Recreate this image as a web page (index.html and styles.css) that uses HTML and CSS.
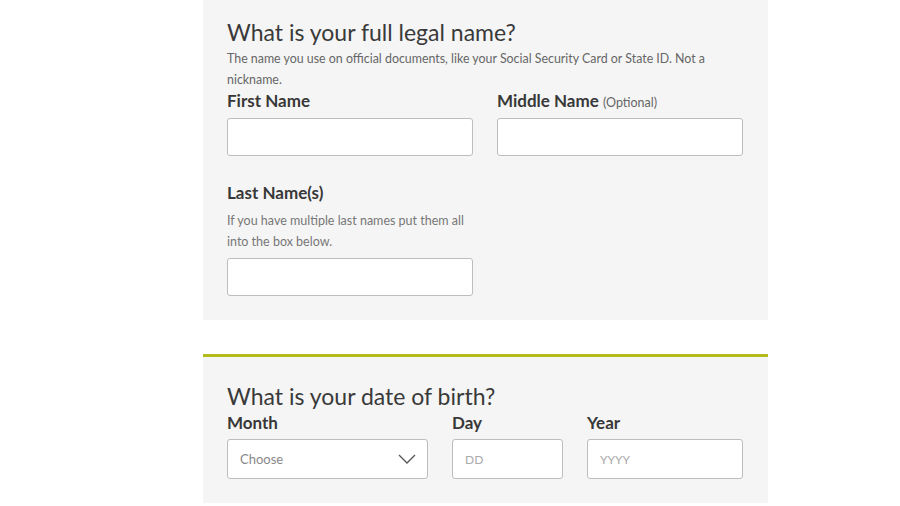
FILE: index.html
```html
<!DOCTYPE html>
<html>
<head>
<meta charset="utf-8">
<link rel="stylesheet" href="styles.css">
</head>
<body>
<div class="page">
  <section class="card">
    <h2 class="q">What is your full legal name?</h2>
    <p class="hint">The name you use on official documents, like your Social Security Card or State ID. Not a nickname.</p>
    <div class="row">
      <div class="field">
        <label class="lbl">First Name</label>
        <div class="input"></div>
      </div>
      <div class="field">
        <label class="lbl">Middle Name <span class="opt">(Optional)</span></label>
        <div class="input"></div>
      </div>
    </div>
    <div class="row last">
      <div class="field">
        <label class="lbl">Last Name(s)</label>
        <p class="help">If you have multiple last names put them all into the box below.</p>
        <div class="input"></div>
      </div>
    </div>
  </section>
  <section class="card accent">
    <h2 class="q">What is your date of birth?</h2>
    <div class="row dob">
      <div class="field month">
        <label class="lbl">Month</label>
        <div class="input select"><span class="ph">Choose</span>
          <svg width="18" height="10" viewBox="0 0 18 10"><path d="M1 1 L9 9 L17 1" fill="none" stroke="#555" stroke-width="1.3"/></svg>
        </div>
      </div>
      <div class="field day">
        <label class="lbl">Day</label>
        <div class="input"><span class="ph light">DD</span></div>
      </div>
      <div class="field year">
        <label class="lbl">Year</label>
        <div class="input"><span class="ph light">YYYY</span></div>
      </div>
    </div>
  </section>
</div>
</body>
</html>
```
FILE: styles.css
```css
* { box-sizing: border-box; }
body { margin: 0; background: #fff; font-family: "Lato", "Open Sans", sans-serif; color: #333; }
.page { width: 565px; margin-left: 203px; }
.card { background: #f5f5f5; padding: 16px 24px 24px; }
.card.accent { margin-top: 34px; border-top: 3px solid #b4bc1c; padding-top: 23px; height: 149px; }
.q { margin: 0; font-size: 23px; font-weight: 400; line-height: 32px; color: #3a3a3a; }
.hint { margin: 0; font-size: 12.4px; line-height: 21px; color: #666; width: 500px; }
.row { display: flex; gap: 24px; }
.field { width: 246px; display: flex; flex-direction: column; }
.lbl { display: block; height: 22px; font-size: 17px; font-weight: 700; line-height: 22px; color: #383838; margin-bottom: 6px; }
.opt { font-size: 12.5px; font-weight: 400; color: #666; line-height: 1; }
.input { height: 38px; background: #fff; border: 1px solid #bdbdbd; border-radius: 3px; display: flex; align-items: center; padding: 0 12px; }
.row.last { margin-top: 26px; }
.help { margin: 6px 0 6px; font-size: 12.5px; line-height: 21px; color: #777; }
.row.last .lbl { margin-bottom: 0; }
.ph { font-size: 13px; color: #888; }
.ph.light { color: #aaa; font-size: 12px; }
.select { justify-content: space-between; padding-right: 11px; }
.month { width: 201px; }
.day { width: 111px; }
.year { width: 156px; }
.dob .lbl { margin-bottom: 5px; }
.dob .input { height: 40px; }
```
